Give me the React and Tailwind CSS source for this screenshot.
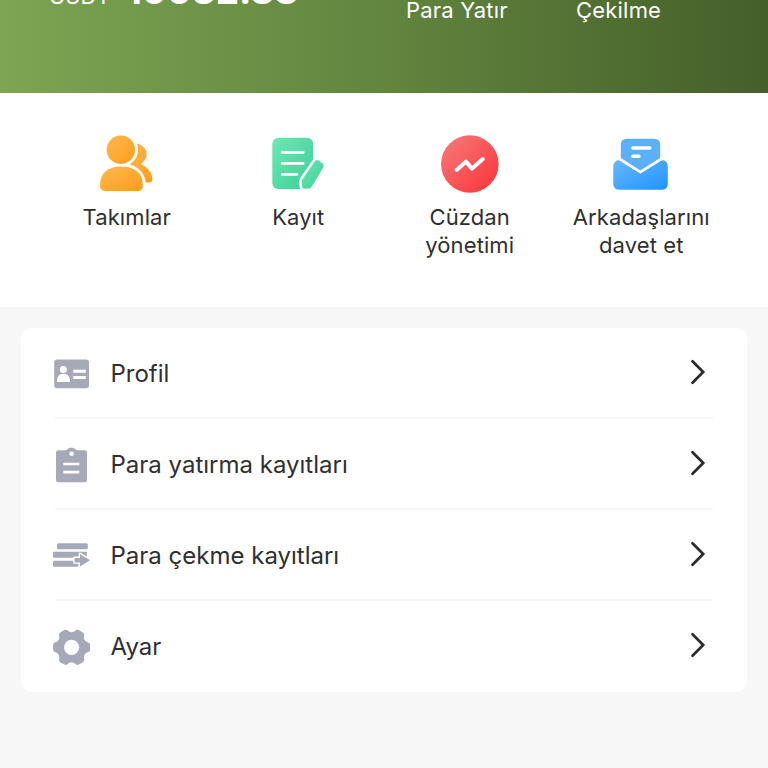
import React from 'react';

const TeamIcon = () => (
  <svg viewBox="0 0 80 64" className="w-20 h-16">
    <defs>
      <linearGradient id="team" x1="0" y1="0" x2="1" y2="1">
        <stop offset="0" stopColor="#ffb84f" />
        <stop offset="1" stopColor="#ff9d1c" />
      </linearGradient>
    </defs>
    <path
      d="M46 11C54 11.5 59.6 16 59.6 22C59.6 26 57.5 29.5 53.5 32C61 35 65.4 41 65.4 47.5C65.4 49.6 64.5 50.5 62 50.5H50L40 34Z"
      fill="url(#team)"
    />
    <circle cx="33.8" cy="17.7" r="17.2" fill="#fff" />
    <path d="M11 50C11 38 20 31.5 34.5 31.5C49 31.5 58.8 40 58.8 53V62H11Z" fill="#fff" />
    <circle cx="33.8" cy="17.7" r="14.2" fill="url(#team)" />
    <path d="M13 53C13 41 21 34.5 34.3 34.5C47.5 34.5 55.8 41 55.8 53C55.8 57.5 54 59 50 59H19C14.8 59 13 57.5 13 53Z" fill="url(#team)" />
  </svg>
);

const RecordIcon = () => (
  <svg viewBox="0 0 80 64" className="w-20 h-16">
    <defs>
      <linearGradient id="record" x1="0" y1="0" x2="1" y2="1">
        <stop offset="0" stopColor="#6ee8b4" />
        <stop offset="1" stopColor="#3dcf97" />
      </linearGradient>
    </defs>
    <rect x="14.3" y="5.7" width="40.8" height="51.2" rx="6" fill="url(#record)" />
    <g stroke="#fff" strokeWidth="2.8" strokeLinecap="round">
      <path d="M24.2 20.3H45.2M24.2 31.3H45.2M24.2 42.3H39" />
    </g>
    <path
      d="M56.8 29.3Q58.5 27 60.8 28.6L64.4 31.2Q66.8 33 65.2 35.4L54.5 53.5Q53.4 56.2 50.5 56.6L46.5 56.8Q44.3 56.8 44 54.5L43.6 50Q43.6 48.6 44.4 47.2Z"
      fill="url(#record)"
      stroke="#fff"
      strokeWidth="5"
      strokeLinejoin="round"
      paintOrder="stroke"
    />
  </svg>
);

const WalletIcon = () => (
  <svg viewBox="0 0 80 64" className="w-20 h-16">
    <defs>
      <linearGradient id="wallet" x1="0" y1="0" x2="1" y2="1">
        <stop offset="0.05" stopColor="#f67a7a" />
        <stop offset="1" stopColor="#fb3035" />
      </linearGradient>
    </defs>
    <circle cx="39.8" cy="32" r="28.8" fill="url(#wallet)" />
    <path
      d="M26.6 38L36 29.6L42 36.6L52.8 27"
      fill="none"
      stroke="#fff"
      strokeWidth="4"
      strokeLinecap="round"
      strokeLinejoin="round"
    />
  </svg>
);

const InviteIcon = () => (
  <svg viewBox="0 0 80 64" className="w-20 h-16">
    <defs>
      <linearGradient id="invite" x1="0" y1="0" x2="1" y2="1">
        <stop offset="0" stopColor="#68b8fb" />
        <stop offset="1" stopColor="#1f93ff" />
      </linearGradient>
    </defs>
    <path d="M19.8 13Q19.8 6.8 26 6.8H53Q59.2 6.8 59.2 13V27L39.3 39L19.8 27Z" fill="#5cb0f9" />
    <path d="M31.8 16H48.8M31.8 24.3H38" stroke="#fff" strokeWidth="3.4" strokeLinecap="round" />
    <path
      d="M14.5 29.5Q16.5 27.3 19.5 29L39.3 41.5L59.5 29Q62.5 27.3 64.8 29.5Q66.8 31 66.8 34V51.5Q66.8 57.8 60.5 57.8H18.5Q12.3 57.8 12.3 51.5V34Q12.3 31 14.5 29.5Z"
      fill="url(#invite)"
    />
    <path d="M18 26.3L39.3 40L61 26.3" fill="none" stroke="#fff" strokeWidth="2.6" />
  </svg>
);

const ProfileIcon = () => (
  <svg viewBox="0 0 38 38" className="w-[38px] h-[38px]">
    <rect x="1.2" y="4.6" width="34.8" height="28.6" rx="3" fill="#a6a9b7" />
    <circle cx="10.4" cy="14.4" r="3.5" fill="#fff" />
    <path d="M4 27C4 21.5 6 18.8 10.4 18.8C14.8 18.8 17 21.5 17 27Z" fill="#fff" />
    <path d="M20.3 16.2H32.8M20.3 22.4H32.8" stroke="#fff" strokeWidth="3" />
  </svg>
);

const DepositIcon = () => (
  <svg viewBox="0 0 38 38" className="w-[38px] h-[38px]">
    <path
      d="M5.5 4.2H12.5C14.5 4.2 14.5 1.8 18.5 1.8C22.5 1.8 22.5 4.2 24.5 4.2H31.7Q34 4.2 34 6.5V33.9Q34 36.2 31.7 36.2H5.3Q3 36.2 3 33.9V6.5Q3 4.2 5.5 4.2Z"
      fill="#a6a9b7"
    />
    <circle cx="18.6" cy="7.8" r="2.3" fill="#fff" />
    <path d="M10.3 18H26.3M10.3 26.2H26.3" stroke="#fff" strokeWidth="2.7" />
  </svg>
);

const WithdrawIcon = () => (
  <svg viewBox="0 0 38 38" className="w-[38px] h-[38px]">
    <g fill="#a6a9b7">
      <rect x="4" y="6.2" width="30.8" height="6" rx="1.5" />
      <rect x="0" y="14.7" width="34" height="6" rx="1" />
      <rect x="0" y="23.7" width="25.5" height="6" rx="1" />
    </g>
    <path
      d="M21.5 21H27V17L37 23.2L27 29.5V25.4H21.5Z"
      fill="#a6a9b7"
      stroke="#fff"
      strokeWidth="2.8"
      strokeLinejoin="round"
      paintOrder="stroke"
    />
  </svg>
);

const SettingsIcon = () => (
  <svg viewBox="0 0 38 38" className="w-[38px] h-[38px]">
    <g transform="translate(18.6 19.3)">
      <path
        d="M16 -2.4V2.4Q8.3 4.8 10.1 12.7L5.9 15.1Q0 9.6 -5.9 15.1L-10.1 12.7Q-8.3 4.8 -16 2.4V-2.4Q-8.3 -4.8 -10.1 -12.7L-5.9 -15.1Q0 -9.6 5.9 -15.1L10.1 -12.7Q8.3 -4.8 16 -2.4Z"
        fill="#a6a9b7"
        stroke="#a6a9b7"
        strokeWidth="5"
        strokeLinejoin="round"
      />
      <circle r="7.6" fill="#fff" />
    </g>
  </svg>
);

const Arrow = () => (
  <svg viewBox="0 0 18 28" className="w-[18px] h-7 mr-1.5 -mt-1">
    <path d="M3.5 3.2L14.2 14L3.5 24.8" fill="none" stroke="#2b2b2d" strokeWidth="2.7" strokeLinecap="round" />
  </svg>
);

const shortcuts = [
  { label: 'Takımlar', Icon: TeamIcon },
  { label: 'Kayıt', Icon: RecordIcon },
  { label: 'Cüzdan yönetimi', Icon: WalletIcon },
  { label: 'Arkadaşlarını davet et', Icon: InviteIcon },
];

const menu = [
  { label: 'Profil', Icon: ProfileIcon },
  { label: 'Para yatırma kayıtları', Icon: DepositIcon },
  { label: 'Para çekme kayıtları', Icon: WithdrawIcon },
  { label: 'Ayar', Icon: SettingsIcon },
];

const Balance = () => (
  <div className="h-[93px] overflow-hidden bg-gradient-to-r from-[#7da553] via-[#62853f] to-[#455f2a] text-white">
    <div className="flex -mt-7 pl-[49px]">
      <div className="flex w-[357px] items-baseline gap-[15px] whitespace-nowrap">
        <span className="text-[22px] leading-[37px] tracking-[0.5px]">USDT</span>
        <span className="text-[37px] leading-[37px] font-bold">10032.88</span>
      </div>
      <span className="w-[170px] pt-6 text-[22px] leading-7 tracking-[0.2px]">Para Yatır</span>
      <span className="pt-6 text-[22px] leading-7 tracking-[0.2px]">Çekilme</span>
    </div>
  </div>
);

const Shortcuts = () => (
  <div className="grid h-[214px] grid-cols-4 bg-white px-[41px] pt-[39px]">
    {shortcuts.map(({ label, Icon }) => (
      <div key={label} className="flex flex-col items-center">
        <Icon />
        <p className="mt-[7px] w-[150px] text-center text-[22px] leading-7 tracking-[0.1px]">{label}</p>
      </div>
    ))}
  </div>
);

const Menu = () => (
  <div className="mx-[21px] mt-[21px] rounded-xl bg-white px-[34px]">
    {menu.map(({ label, Icon }) => (
      <div
        key={label}
        className="flex h-[91px] items-center border-b-2 border-[#f5f5f5] pt-0.5 last:border-b-0 last:pt-0"
      >
        <div className="-ml-0.5">
          <Icon />
        </div>
        <span className="ml-[19.5px] flex-1 text-[24px] leading-8">{label}</span>
        <Arrow />
      </div>
    ))}
  </div>
);

const App = () => (
  <div className="h-[768px] w-[768px] overflow-hidden bg-[#f7f7f7] font-['Inter','Liberation_Sans',sans-serif] text-[#2f2f31]">
    <Balance />
    <Shortcuts />
    <Menu />
  </div>
);

export default App;
